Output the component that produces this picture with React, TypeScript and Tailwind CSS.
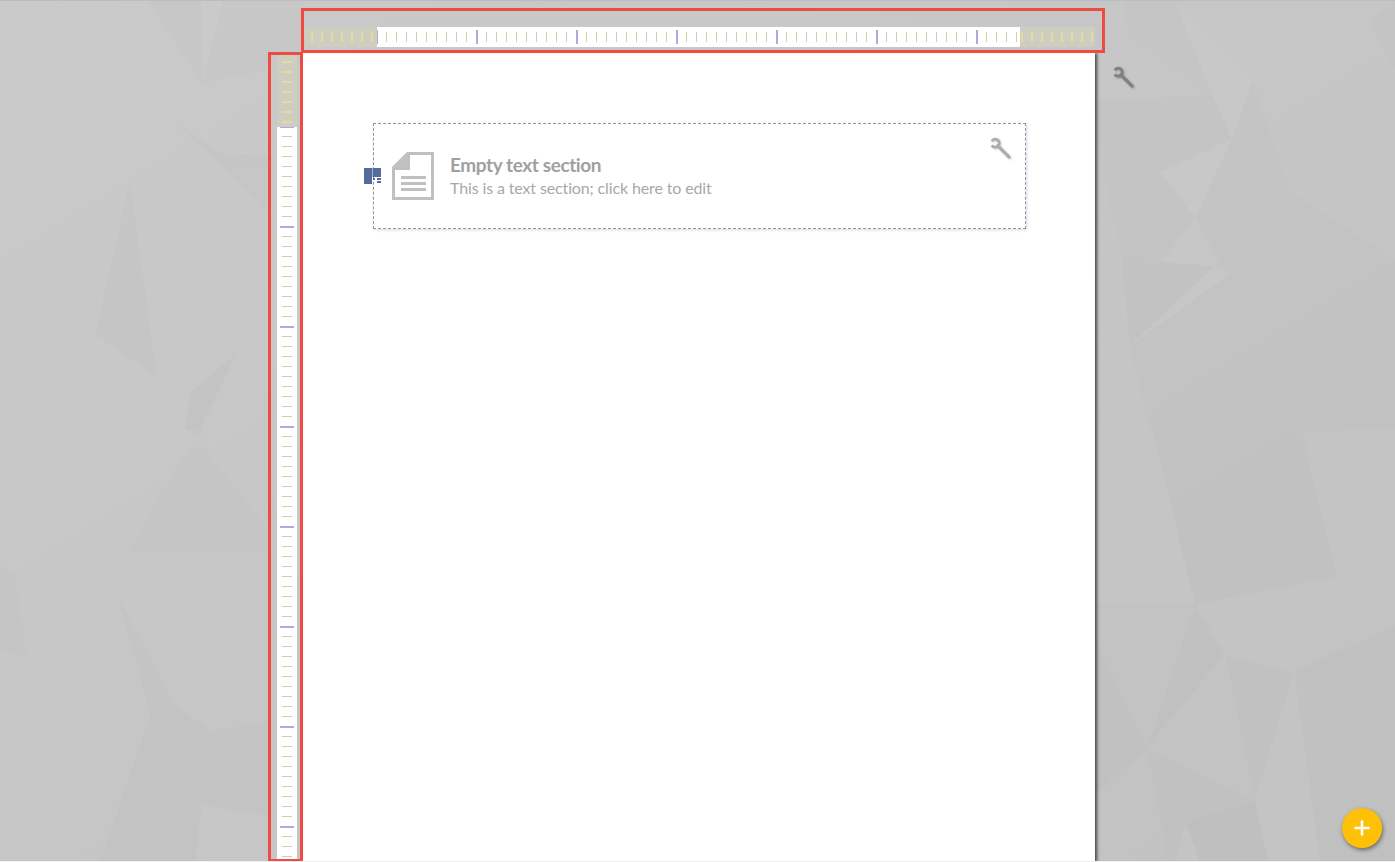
const polygons: [string, string][] = [
    // left side
    ['147,0 202,84 201,0', '#c6c6c6'],
    ['201,0 223,0 202,84', '#cbcbcb'],
    ['223,0 303,0 303,62 202,84', '#c7c7c7'],
    ['178,125 222,153 270,155 270,168 228,172', '#c4c4c4'],
    ['228,172 270,168 270,215', '#c5c5c5'],
    ['130,179 95,335 157,377', '#c4c4c4'],
    ['237,353 190,393 185,430 200,430', '#c1c1c1'],
    ['190,430 205,430 180,460 127,553 270,551 270,530', '#c5c5c5'],
    ['118,597 150,715 175,704', '#c3c3c3'],
    ['150,715 175,704 210,731', '#c1c1c1'],
    ['150,715 100,862 195,862 202,805 210,731', '#c2c2c2'],
    ['0,565 15,575 28,660 0,650', '#c5c5c5'],
    ['210,731 270,720 270,815 202,805', '#c3c3c3'],
    ['202,805 195,862 270,862 270,818', '#c8c8c8'],
    ['28,660 36,760 0,862 0,710', '#c6c6c6'],
    // right side
    ['1123,0 1128,37 1212,95 1175,0', '#c5c5c5'],
    ['1175,0 1253,80 1232,139 1212,95', '#cacaca'],
    ['1095,100 1107,100 1212,95 1232,139 1161,172 1100,160', '#c3c3c3'],
    ['1161,172 1232,139 1195,218', '#cacaca'],
    ['1100,160 1161,172 1195,218 1161,262 1120,250', '#c3c3c3'],
    ['1195,218 1161,262 1215,266', '#c8c8c8'],
    ['1232,139 1253,80 1290,190 1228,275 1195,218', '#c3c3c3'],
    ['1120,250 1161,262 1215,266 1130,346', '#c1c1c1'],
    ['1215,266 1228,275 1130,346', '#c9c9c9'],
    ['1130,346 1228,275 1290,190 1395,260 1395,430 1150,430', '#c2c2c2'],
    ['1370,22 1395,0 1395,70', '#c3c3c3'],
    ['1152,430 1302,430 1337,577 1195,605', '#c0c0c0'],
    ['1095,430 1152,430 1195,605 1095,605', '#c6c6c6'],
    ['1302,430 1395,430 1395,625 1294,672 1337,577', '#c4c4c4'],
    ['1195,605 1337,577 1294,672 1225,655', '#c5c5c5'],
    ['1294,672 1395,625 1395,800', '#bfbfbf'],
    ['1294,672 1395,800 1395,862 1320,862', '#c0c0c0'],
    ['1225,655 1294,672 1255,800', '#c0c0c0'],
    ['1195,605 1225,655 1147,748', '#bfbfbf'],
    ['1095,605 1195,605 1147,748 1095,640', '#c3c3c3'],
    ['1095,640 1147,748 1095,795', '#bebebe'],
    ['1225,655 1255,800 1147,748', '#c4c4c4'],
    ['1147,748 1255,800 1185,822', '#c1c1c1'],
    ['1255,800 1294,672 1320,862 1268,862', '#c6c6c6'],
    ['1185,822 1255,800 1268,862 1200,862', '#bdbdbd'],
    ['1147,748 1185,822 1175,862 1168,862', '#c0c0c0'],
    ['1095,795 1147,748 1168,862 1095,862', '#c3c3c3'],
    ['1185,822 1200,862 1175,862', '#c6c6c6'],
];

const cells = (count: number) => Array.from({ length: count }, (_, i) => i);

const Wrench = ({ className }: { className: string }) => (
    <svg viewBox="0 0 24 24" fill="none" stroke="currentColor" className={className}>
        <path d="M1.9 4.4A4.2 4.2 0 1 1 1.9 8.6" strokeWidth="3" />
        <path d="M8 9L20 21" strokeWidth="3.4" strokeLinecap="round" />
    </svg>
);

const HorizontalRuler = () => (
    <div className="absolute left-[301px] top-2 h-[45px] w-[804px] border-[3px] border-[#ef4b43] pl-px pt-4">
        <div className="flex h-5">
            <div className="flex w-[72px] items-center gap-2 bg-[#cfcdbf] pl-1.5">
                {cells(7).map((i) => <div key={i} className="h-2.5 w-0.5 bg-[#e0dca6]" />)}
            </div>
            <div className="w-[643px] overflow-hidden bg-white">
                <div className="-ml-[5px] flex h-5 items-center">
                    {cells(65).map((i) => (
                        <div key={i} className="w-2.5 shrink-0 pl-1">
                            {i % 10 === 0
                                ? <div className="h-3.5 w-0.5 bg-[#b1a8e0]" />
                                : <div className="h-2.5 w-px bg-[#d3cfa9]" />}
                        </div>
                    ))}
                </div>
            </div>
            <div className="flex w-[75px] items-center gap-2 bg-[#cfcdbf] pl-px">
                {cells(8).map((i) => <div key={i} className="h-2.5 w-0.5 bg-[#e0dca6]" />)}
            </div>
        </div>
    </div>
);

const VerticalRuler = () => (
    <div className="absolute left-[268px] top-[52px] h-[810px] w-[35px] border-[3px] border-[#ef4b43] pl-1.5">
        <div className="flex h-full w-5 flex-col">
            <div className="flex h-[72px] shrink-0 flex-col items-center gap-2 bg-[#cfcdbf] pt-1.5">
                {cells(7).map((i) => <div key={i} className="h-0.5 w-2.5 bg-[#e0dca6]" />)}
            </div>
            <div className="min-h-0 flex-1 overflow-hidden bg-white">
                <div className="-mt-[5px] flex w-5 flex-col items-center">
                    {cells(74).map((i) => (
                        <div key={i} className="flex h-2.5 w-full shrink-0 justify-center pt-1">
                            {i % 10 === 0
                                ? <div className="h-0.5 w-3.5 bg-[#b1a8e0]" />
                                : <div className="h-px w-2.5 bg-[#d3cfa9]" />}
                        </div>
                    ))}
                </div>
            </div>
        </div>
    </div>
);

const DocIcon = () => (
    <svg width="42" height="48" viewBox="0 0 42 48" className="shrink-0">
        <path d="M15 0H42V48H0V15Z" fill="#c0c0c0" />
        <path d="M18 3H39V45H3V18H18Z" fill="#fff" />
        <path d="M9 24H34V27H9ZM9 30H34V33H9ZM9 36H34V39H9Z" fill="#c0c0c0" />
    </svg>
);

const LayoutHandle = () => (
    <svg width="17" height="16" viewBox="0 0 17 16" className="absolute -left-[10px] top-11">
        <path d="M0 0H8V16H0ZM8.5 0H17V9H8.5Z" fill="#536b9f" />
        <path d="M9 10H11V12H9ZM13 10H15V12H13ZM15 10H17V12H15ZM13 13H15V15H13ZM15 13H17V15H15Z" fill="#536b9f" />
    </svg>
);

export default function App() {
    return (
        <div className="relative h-[862px] w-full overflow-hidden bg-gradient-to-br from-[#cacaca] to-[#c2c2c2] font-['Lato',sans-serif]">
            <svg viewBox="0 0 1395 862" className="absolute inset-0 h-full w-full opacity-50">
                {polygons.map(([points, fill]) => <polygon key={points} points={points} fill={fill} />)}
            </svg>
            <div className="absolute inset-x-0 top-0 h-px bg-[#b9bec3]" />

            <div className="relative ml-[303px] mt-[53px] h-[809px] w-[792px] bg-white px-[70px] pt-[70px] shadow-[2px_0_3px_rgba(0,0,0,0.65)]">
                <div className="relative flex h-[106px] w-[653px] items-center gap-4 border border-dashed border-[#8b93b5] pl-[18px] shadow-[1px_1px_3px_rgba(0,0,0,0.15)]">
                    <LayoutHandle />
                    <DocIcon />
                    <div className="-mt-px flex flex-col">
                        <div className="text-[19px] font-bold leading-[24px] tracking-[-0.4px] text-[#a0a0a0]">Empty text section</div>
                        <div className="text-[16px] leading-[22px] tracking-[-0.13px] text-[#a8a8a8]">This is a text section; click here to edit</div>
                    </div>
                    <Wrench className="absolute right-3 top-[13px] h-[23px] w-[23px] text-[#adadad] drop-shadow-[1px_1px_1px_rgba(0,0,0,0.15)]" />
                </div>
            </div>

            <HorizontalRuler />
            <VerticalRuler />

            <Wrench className="absolute left-[1113px] top-[66px] h-[23px] w-[23px] text-[#808080] drop-shadow-[1px_1px_1px_rgba(0,0,0,0.2)]" />

            <button className="absolute left-[1342px] top-[808px] flex h-10 w-10 items-center justify-center rounded-full bg-[#ffc107] shadow-[1px_2px_4px_rgba(0,0,0,0.45)]">
                <svg width="16" height="16" viewBox="0 0 16 16" fill="#fff">
                    <path d="M6.7 0.5H9.3V6.7H15.5V9.3H9.3V15.5H6.7V9.3H0.5V6.7H6.7Z" />
                </svg>
            </button>
            <div className="absolute inset-x-0 bottom-0 h-px bg-[#efefef]" />
        </div>
    );
}
